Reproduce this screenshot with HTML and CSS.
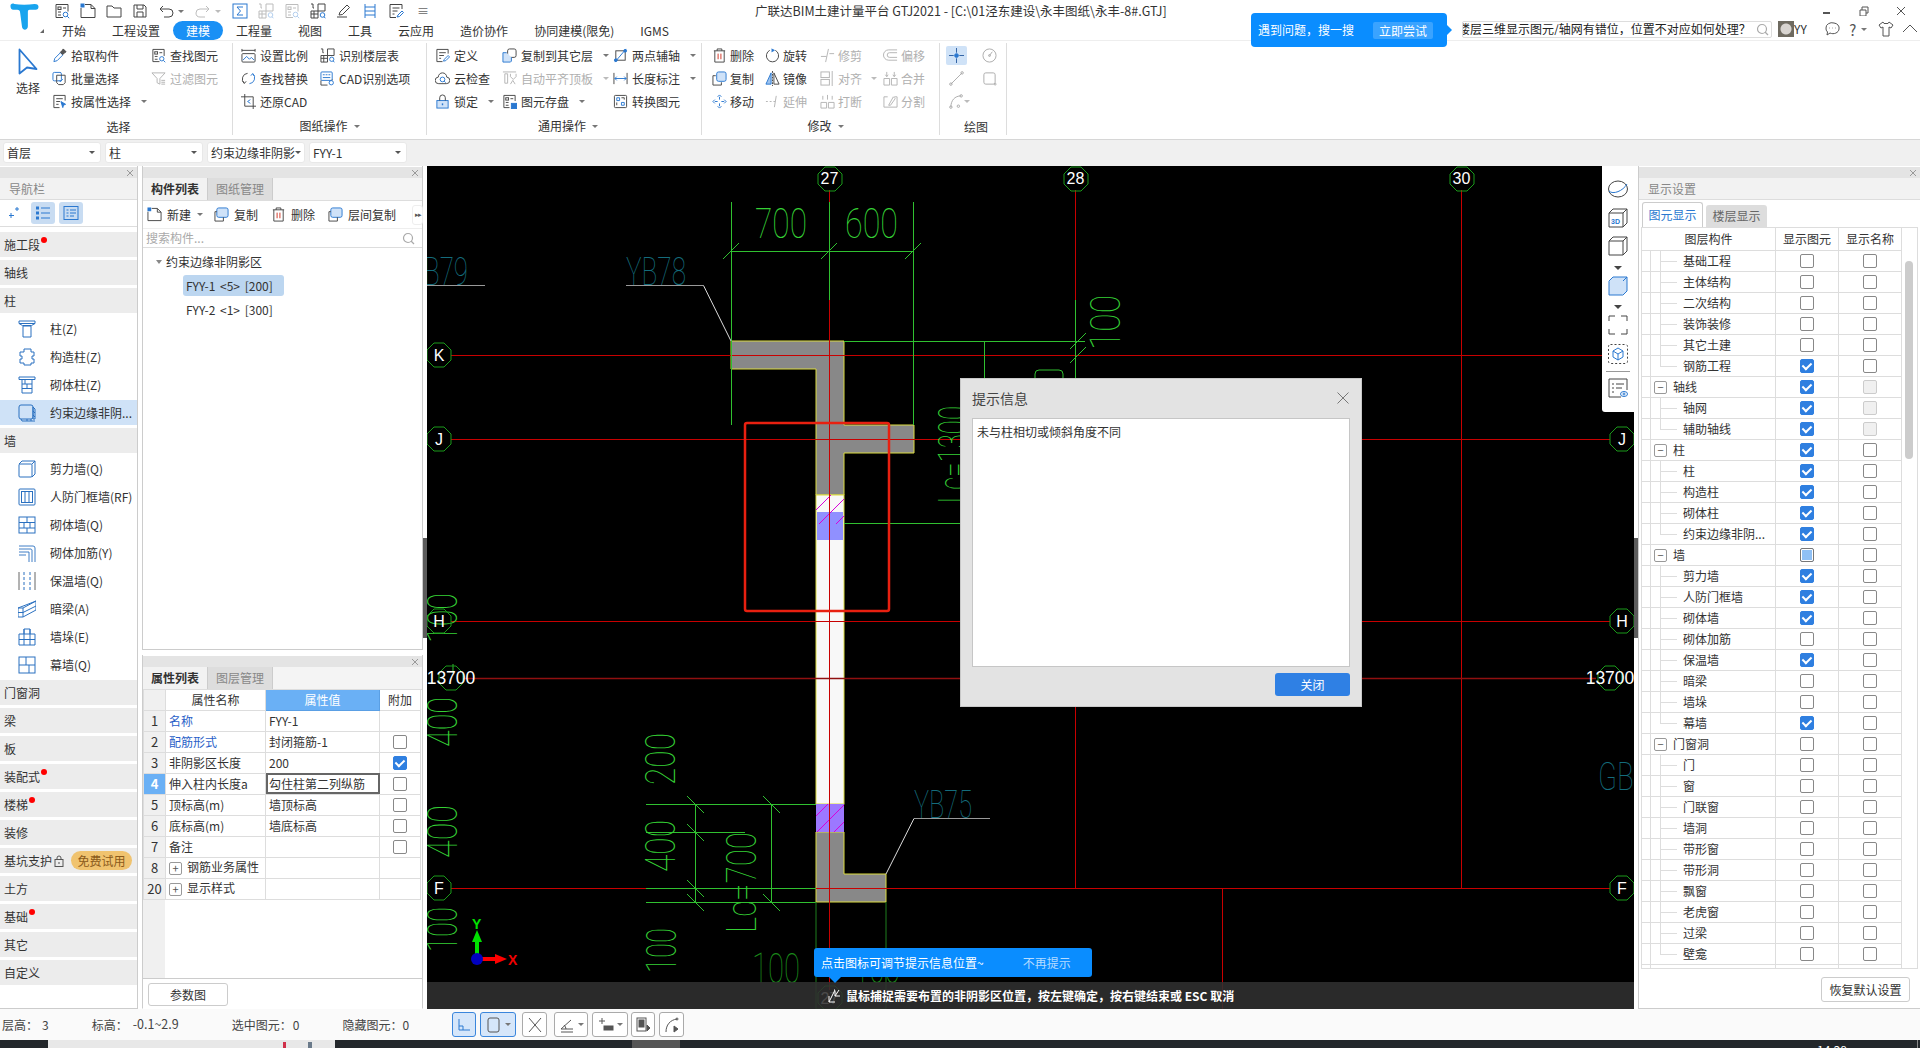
FILE: index.html
```html
<!DOCTYPE html>
<html lang="zh-CN">
<head>
<meta charset="utf-8">
<title>广联达BIM土建计量平台 GTJ2021</title>
<link rel="stylesheet" href="styles.css">
</head>
<body>
<svg class="defs" aria-hidden="true">
<defs>
<symbol id="pick" viewBox="0 0 16 16"><path d="M2 14.5l1-3.5 6-6 2.5 2.5-6 6z" stroke="#2a78d0"/><path d="M9 4.5l2-2 1-1.5 3 3-1.5 1-2 2z" fill="#555"/></symbol>
<symbol id="batch" viewBox="0 0 16 16"><rect x="1" y="1.5" width="9" height="9" rx="1.5" stroke="#2a78d0"/><path d="M5 4.5h9v8l-2 2H7l-2-2z"/><path d="M7.5 10l1.5 1.5 2.500-3" stroke="#2a78d0"/></symbol>
<symbol id="attr" viewBox="0 0 16 16"><path d="M14 7V1.500H2v13h6"/><path d="M4.500 5h7M4.500 8h4M4.500 11h2.500"/><path d="M9.500 8l5 3-2.200.8-.8 2.700z" fill="#2a78d0" stroke="#2a78d0"/></symbol>
<symbol id="find" viewBox="0 0 16 16"><path d="M9 14.500H2v-13h12v7"/><rect x="4" y="4" width="3" height="2.500"/><path d="M9 5h3M4 9h3M4 12h3"/><circle cx="11.500" cy="11.500" r="2.300" stroke="#2a78d0"/><path d="M13.200 13.200l2 2" stroke="#2a78d0"/></symbol>
<symbol id="filter" viewBox="0 0 16 16"><path d="M1 2h14l-5.500 6v6l-3-1.500V8z"/><path d="M11 10h4M11 12h4M11 14h4"/></symbol>
<symbol id="scale" viewBox="0 0 16 16"><path d="M1 1v3M15 1v3M1 2.500h14"/><rect x="1" y="6" width="14" height="9" rx="1"/><path d="M2 13l4-4 3 3 2-2 3 3" stroke="#2a78d0"/></symbol>
<symbol id="replace" viewBox="0 0 16 16"><path d="M7 2.500A6 6 0 0 0 3.500 13"/><path d="M1.500 10.500l2 2.800 2-2.300"/><path d="M9 13.500A6 6 0 0 0 12.500 3" stroke="#2a78d0"/><path d="M14.500 5.500l-2-2.800-2 2.300" stroke="#2a78d0"/></symbol>
<symbol id="restore" viewBox="0 0 16 16"><path d="M4 0v13h12M0 3h13v13"/><path d="M10 6L7 8l3 2" stroke="#2a78d0"/></symbol>
<symbol id="floor" viewBox="0 0 16 16"><path d="M1 1h2v4h1M1 8h7v7H1zM1 11h7M4 8v7M8 1h7v7H8z"/><circle cx="12.500" cy="12" r="2.300" stroke="#2a78d0"/><path d="M14 13.800l1.500 1.500" stroke="#2a78d0"/></symbol>
<symbol id="cad" viewBox="0 0 16 16"><rect x="1" y="1" width="12" height="9" rx="1" stroke="#2a78d0"/><path d="M3 4h2M6 4h2M9 4h2M3 7h8" stroke="#2a78d0"/><path d="M1 10v5h7M13 10v-1"/><circle cx="12" cy="12.500" r="2.300" stroke="#2a78d0"/></symbol>
<symbol id="define" viewBox="0 0 16 16"><path d="M14 6V1.500H2v13h6"/><path d="M4.500 5h7M4.500 8h5M4.500 11h2"/><path d="M9 14l1-2 4-4 1.500 1.500-4 4z" stroke="#2a78d0"/></symbol>
<symbol id="cloud" viewBox="0 0 16 16"><path d="M4 13.500a3.500 3.500 0 0 1-.5-7 4.500 4.500 0 0 1 9 0 3.500 3.500 0 0 1-.5 7z"/><circle cx="8" cy="9" r="2.500" stroke="#2a78d0"/><path d="M9.800 10.800l1.700 1.700" stroke="#2a78d0"/></symbol>
<symbol id="lock" viewBox="0 0 16 16"><rect x="2" y="7" width="12" height="8" fill="#cfe2f8" stroke="#2a78d0"/><path d="M5 7V4a3 3 0 0 1 6 0v3"/><path d="M8 10v2" stroke="#2a78d0" stroke-width="1.500"/></symbol>
<symbol id="copyto" viewBox="0 0 16 16"><rect x="6" y="1" width="9" height="9" rx="2"/><path d="M5 5H1v10h8l1-1v-4" fill="#cfe2f8" stroke="#2a78d0"/></symbol>
<symbol id="autoalign" viewBox="0 0 16 16"><path d="M1 1h14M3 3h3v10H3zM9 3v3l3 3 3-3V3"/><path d="M9 14l2.500-4 2.500 4"/></symbol>
<symbol id="store" viewBox="0 0 16 16"><path d="M8 14.500H2v-13h12v6"/><rect x="4" y="4" width="3" height="2.500"/><path d="M9 5h3M4 9h3M4 12h3"/><rect x="10" y="10" width="5.500" height="5.500" fill="#2a78d0" stroke="#2a78d0"/></symbol>
<symbol id="twopt" viewBox="0 0 16 16"><rect x="3" y="3" width="10" height="10"/><path d="M2 15L14 1" stroke="#2a78d0"/><circle cx="3" cy="13" r="1.500" fill="#2a78d0" stroke="#2a78d0"/><circle cx="13" cy="3" r="1.500" fill="#2a78d0" stroke="#2a78d0"/></symbol>
<symbol id="dimlen" viewBox="0 0 16 16"><path d="M1 2v12M15 2v12"/><path d="M2 8h12M4 6L2 8l2 2M12 6l2 2-2 2" stroke="#2a78d0"/></symbol>
<symbol id="convert" viewBox="0 0 16 16"><rect x="1.500" y="1.500" width="13" height="13" rx="1"/><path d="M4 4h3v3H4zM9 9h3v3H9z" stroke="#2a78d0"/><path d="M9 4h3v2M4 12V9"/></symbol>
<symbol id="del" viewBox="0 0 16 16"><path d="M2 3h12M5.500 3V1h5v2M3 3v12h10V3"/><path d="M6.500 6v6M9.500 6v6" stroke="#d03020"/></symbol>
<symbol id="rotate" viewBox="0 0 16 16"><path d="M5 2.500A6.500 6.500 0 1 0 11 2.500"/><path d="M7 1l3 1.500L7 4" stroke="#2a78d0" fill="#2a78d0"/></symbol>
<symbol id="trim" viewBox="0 0 16 16"><path d="M9 1L6 15M1 9h6M10 6h5"/></symbol>
<symbol id="offset" viewBox="0 0 16 16"><path d="M15 2H6a5.500 5.500 0 0 0 0 11h9M15 5H7a2.500 2.500 0 0 0 0 5h8"/></symbol>
<symbol id="copy" viewBox="0 0 16 16"><rect x="5" y="1" width="10" height="10" rx="2" fill="#cfe2f8" stroke="#2a78d0"/><path d="M4 5H1v10h9v-3"/></symbol>
<symbol id="mirror" viewBox="0 0 16 16"><path d="M1 14L6.500 2v12z" fill="#9ec3ee" stroke="#2a78d0"/><path d="M15 14L9.500 2v12z"/><path d="M8 0v16" stroke-dasharray="2 1"/></symbol>
<symbol id="align" viewBox="0 0 16 16"><rect x="1" y="1" width="9" height="6"/><rect x="1" y="9" width="9" height="6"/><path d="M13 0v16"/></symbol>
<symbol id="merge" viewBox="0 0 16 16"><path d="M1 8h6v7H1zM9 8h6v7H9z"/><path d="M4 1v5M2.500 4L4 6l1.500-2M12 1v5M10.500 4L12 6l1.500-2"/></symbol>
<symbol id="move" viewBox="0 0 16 16"><g stroke="#2a78d0"><path d="M8 3v3M8 10v3M3 8h3M10 8h3M6 3l2-2 2 2M6 13l2 2 2-2M3 6L1 8l2 2M13 6l2 2-2 2"/></g></symbol>
<symbol id="extend" viewBox="0 0 16 16"><path d="M1 8h2M5 8h2M9 8h2M12 2l-2 12"/></symbol>
<symbol id="brk" viewBox="0 0 16 16"><path d="M1 9h6v6H1zM9 9h6v6H9z"/><path d="M3 6V2M13 6V2M8 1v5"/></symbol>
<symbol id="split" viewBox="0 0 16 16"><path d="M5 3H1v11h14V3h-3"/><path d="M6 12l5-9 2 2-5 7z"/></symbol>
<symbol id="dpoint" viewBox="0 0 16 16"><path d="M8 0v5M8 11v5M0 8h5M11 8h5" stroke="#2a5ca0"/><circle cx="8" cy="8" r="2" fill="#2a78d0" stroke="#2a78d0"/></symbol>
<symbol id="dcircle" viewBox="0 0 16 16"><circle cx="8" cy="8" r="7"/><path d="M8 8l3-4"/><circle cx="8" cy="8" r="1"/></symbol>
<symbol id="dline" viewBox="0 0 16 16"><path d="M2 14L14 2"/><circle cx="2" cy="14" r="1.300"/><circle cx="14" cy="2" r="1.300"/></symbol>
<symbol id="drect" viewBox="0 0 16 16"><rect x="2" y="2" width="12" height="12" rx="2"/><circle cx="14" cy="14" r="1"/></symbol>
<symbol id="darc" viewBox="0 0 16 16"><path d="M2 14C2 7 6 2 13 2"/><circle cx="2" cy="14" r="1.300"/><circle cx="13" cy="2" r="1.300"/><circle cx="10" cy="13" r="1.300"/></symbol>
<symbol id="newdoc" viewBox="0 0 16 16"><path d="M5 1.500h6l4 4v9H1V5"/><path d="M11 1.500v4h4"/><rect x="0.500" y="0.500" width="4" height="4" fill="#2a78d0" stroke="none"/></symbol>
<symbol id="copy2" viewBox="0 0 16 16"><rect x="3" y="1" width="12" height="10" rx="2" fill="#cfe2f8" stroke="#2a78d0"/><path d="M3 5H1v10h9v-4"/></symbol>

<symbol id="n-col" viewBox="0 0 18 18"><path d="M1 1h16v2.500l-3.500 2H4.500L1 3.500zM5 6h8v11H5zM1 3.500h16"/></symbol>
<symbol id="n-gz" viewBox="0 0 18 18"><path d="M6 1h7v3h3v4h-2v3h2v4h-3v2H6v-2H2v-4h2V8H2V4h4z"/></symbol>
<symbol id="n-qt" viewBox="0 0 18 18"><path d="M1 1h16v2.500H1zM4 3.500h10V17H4zM4 8h10M4 12.500h10M9 8v4.500M7 3.500v4.500"/></symbol>
<symbol id="n-fyy" viewBox="0 0 18 18"><rect x="1" y="1" width="14" height="14" rx="2"/><path d="M15 3l2 2v10h-2zM3 15l1 2h13M9 15v2M13 15v2M15 7l2 2M15 11l2 2"/></symbol>
<symbol id="n-jlq" viewBox="0 0 18 18"><rect x="1" y="4" width="13" height="13" rx="1"/><path d="M1 4l3-3h13v13l-3 3M14 4l3-3"/></symbol>
<symbol id="n-rf" viewBox="0 0 18 18"><rect x="1" y="1" width="16" height="16" rx="1"/><rect x="3.500" y="3.500" width="11" height="11"/><path d="M7 3.500v11M11 3.500v11"/></symbol>
<symbol id="n-qtq" viewBox="0 0 18 18"><rect x="1" y="1" width="16" height="16"/><path d="M1 6.500h16M1 12h16M9 1v5.500M6 6.500V12M12 6.500V12M9 12v5"/></symbol>
<symbol id="n-jj" viewBox="0 0 18 18"><path d="M1 2h14a2 2 0 0 1 2 2v14M1 5h12a2 2 0 0 1 1 1v12M1 8h10v10M1 11h7" stroke-width=".9"/></symbol>
<symbol id="n-bw" viewBox="0 0 18 18"><path d="M1 0v18M17 0v18" stroke="#666"/><path d="M6 0v18M12 0v18" stroke-dasharray="3 2"/></symbol>
<symbol id="n-al" viewBox="0 0 18 18"><path d="M0 8l13-5 5-2v9L5 17H0zM0 8h5l13-7M5 8v9M0 12.500h5M5 12.500L18 6"/></symbol>
<symbol id="n-qd" viewBox="0 0 18 18"><path d="M1 6h5V1h6v5h5v11H1zM1 11.500h16M6 1v16M12 1v16M6 6h6"/></symbol>
<symbol id="n-mq" viewBox="0 0 18 18"><rect x="1" y="1" width="16" height="16"/><path d="M1 9h16M8 1v8M11 9v8"/></symbol>
<symbol id="oct" viewBox="0 0 26 26"><polygon points="8,1 18,1 25,8 25,18 18,25 8,25 1,18 1,8" fill="none" stroke="#1a9a1a"/></symbol>
</defs>
</svg>

<div class="app">
<header class="ribbon">
  <div class="top">
    <svg class="logo" viewBox="0 0 32 30"><path d="M2 3C2 1 4 0 6 1c6 1 14 1 21 0 3 0 4 1 4 3s-1 3-3 3h-6c-2 0-2 1-2 3v14c0 4-5 5-6 1L12 10c0-2-1-3-3-3H5C3 7 2 5 2 3z" fill="#18a4ee"/></svg>
    <span class="logo-tri"></span>
    <div class="top-main">
      <div class="qa">
        <svg class="qi"><use href="#find"/></svg>
        <svg class="qi"><use href="#newdoc"/></svg>
        <svg class="qi"><path d="M1 14V3h5l2 2h7v9z"/></svg>
        <svg class="qi"><path d="M2 2h10l2 2v10H2zM5 2v4h6V2M5 14V9h6v5"/></svg>
        <svg class="qi"><path d="M3 6h8a3.500 3.500 0 0 1 0 8H6M5 3L2 6l3 3"/></svg><i class="ar qa-dd"></i>
        <svg class="qi dis"><path d="M13 6H5a3.500 3.500 0 0 0 0 8h5M11 3l3 3-3 3"/></svg><i class="ar qa-dd dim"></i>
        <svg class="qi blue"><rect x="1" y="1" width="14" height="14"/><path d="M11 4H5l3.500 4L5 12h6"/></svg>
        <svg class="qi dis"><use href="#floor"/></svg>
        <svg class="qi dis"><use href="#find"/></svg>
        <svg class="qi"><use href="#floor"/></svg>
        <svg class="qi"><path d="M1 14h10M3 12l1-3 7-7 2.500 2.500-7 7z" /></svg>
        <svg class="qi blue"><path d="M3 1v14M13 1v14M3 4h10M3 8h10M3 12h10"/></svg>
        <svg class="qi"><use href="#define"/></svg>
        <span class="qa-more">≡</span>
        <span class="title">广联达BIM土建计量平台 GTJ2021 - [C:\01泾东建设\永丰图纸\永丰-8#.GTJ]</span>
        <div class="win">
          <svg class="wi"><path d="M1 7h7" stroke-width="2"/></svg>
          <svg class="wi"><path d="M1 4h6v6H1zM3 4V1h6v6H7"/></svg>
          <svg class="wi"><path d="M1 1l8 8M9 1l-8 8"/></svg>
        </div>
      </div>
      <div class="tabs">
        <span class="tab">开始</span><span class="tab">工程设置</span><span class="tab on">建模</span><span class="tab">工程量</span><span class="tab">视图</span><span class="tab">工具</span><span class="tab">云应用</span><span class="tab">造价协作</span><span class="tab">协同建模(限免)</span><span class="tab">IGMS</span>
        <div class="tools-r">
          <div class="search"><span class="search-t">楼层三维显示图元/轴网有错位，位置不对应如何处理？</span><svg class="s-ic"><circle cx="6" cy="6" r="4.500"/><path d="M9 9l3 3"/></svg></div>
          <span class="avatar"></span><span class="yy">YY</span>
          <svg class="ti chat"><path d="M2 7a6 5 0 0 1 8-5 6 5 0 0 1 5 6 6 5 0 0 1-9 4l-3 2 .5-3A6 5 0 0 1 2 7zM5 7h.5M8 7h.5M11 7h.5" stroke="#555"/></svg>
          <span class="help">?</span><i class="ar"></i>
          <svg class="ti shirt"><path d="M5 1L1 4l2 3 2-1v9h6V6l2 1 2-3-4-3-1 1.500H6z"/></svg>
          <svg class="ti up"><path d="M1 11l7-7 7 7"/></svg>
        </div>
      </div>
    </div>
    <div class="bubble">遇到问题，搜一搜<span class="try">立即尝试</span></div>
  </div>
  <div class="groups">
    <section class="grp g1">
      <div class="grid">
        <div class="big"><svg class="big-ic" viewBox="0 0 20 27"><path d="M1.500 1.500L18.500 21 9 19.500 1.500 25.500z" fill="#fff" stroke="#2a78d0" stroke-width="1.800" stroke-linejoin="round"/></svg><span>选择</span></div>
        <div class="ri"><svg class="ic"><use href="#pick"/></svg>拾取构件</div>
        <div class="ri"><svg class="ic"><use href="#find"/></svg>查找图元</div>
        <div class="ri"><svg class="ic"><use href="#batch"/></svg>批量选择</div>
        <div class="ri dis"><svg class="ic"><use href="#filter"/></svg>过滤图元</div>
        <div class="ri"><svg class="ic"><use href="#attr"/></svg>按属性选择<i class="ar"></i></div>
      </div>
      <div class="glabel lb">选择</div>
    </section>
    <section class="grp g2">
      <div class="grid">
        <div class="ri"><svg class="ic"><use href="#scale"/></svg>设置比例</div>
        <div class="ri"><svg class="ic"><use href="#floor"/></svg>识别楼层表</div>
        <div class="ri"><svg class="ic"><use href="#replace"/></svg>查找替换</div>
        <div class="ri"><svg class="ic"><use href="#cad"/></svg>CAD识别选项</div>
        <div class="ri"><svg class="ic"><use href="#restore"/></svg>还原CAD</div>
      </div>
      <div class="glabel">图纸操作<i class="ar"></i></div>
    </section>
    <section class="grp g3">
      <div class="grid">
        <div class="ri"><svg class="ic"><use href="#define"/></svg>定义</div>
        <div class="ri"><svg class="ic"><use href="#copyto"/></svg>复制到其它层<i class="ar"></i></div>
        <div class="ri"><svg class="ic"><use href="#twopt"/></svg>两点辅轴<i class="ar"></i></div>
        <div class="ri"><svg class="ic"><use href="#cloud"/></svg>云检查</div>
        <div class="ri dis"><svg class="ic"><use href="#autoalign"/></svg>自动平齐顶板<i class="ar"></i></div>
        <div class="ri"><svg class="ic"><use href="#dimlen"/></svg>长度标注<i class="ar"></i></div>
        <div class="ri"><svg class="ic"><use href="#lock"/></svg>锁定<i class="ar"></i></div>
        <div class="ri"><svg class="ic"><use href="#store"/></svg>图元存盘<i class="ar"></i></div>
        <div class="ri"><svg class="ic"><use href="#convert"/></svg>转换图元</div>
      </div>
      <div class="glabel">通用操作<i class="ar"></i></div>
    </section>
    <section class="grp g4">
      <div class="grid">
        <div class="ri tight"><svg class="ic"><use href="#del"/></svg>删除</div>
        <div class="ri tight"><svg class="ic"><use href="#rotate"/></svg>旋转</div>
        <div class="ri dis tight"><svg class="ic"><use href="#trim"/></svg>修剪</div>
        <div class="ri dis tight"><svg class="ic"><use href="#offset"/></svg>偏移</div>
        <div class="ri tight"><svg class="ic"><use href="#copy"/></svg>复制</div>
        <div class="ri tight"><svg class="ic"><use href="#mirror"/></svg>镜像</div>
        <div class="ri dis tight"><svg class="ic"><use href="#align"/></svg>对齐<i class="ar"></i></div>
        <div class="ri dis tight"><svg class="ic"><use href="#merge"/></svg>合并</div>
        <div class="ri tight"><svg class="ic"><use href="#move"/></svg>移动</div>
        <div class="ri dis tight"><svg class="ic"><use href="#extend"/></svg>延伸</div>
        <div class="ri dis tight"><svg class="ic"><use href="#brk"/></svg>打断</div>
        <div class="ri dis tight"><svg class="ic"><use href="#split"/></svg>分割</div>
      </div>
      <div class="glabel">修改<i class="ar"></i></div>
    </section>
    <section class="grp g5">
      <div class="grid">
        <div class="dbtn on"><svg class="ic"><use href="#dpoint"/></svg></div>
        <div class="dbtn dis"><svg class="ic"><use href="#dcircle"/></svg></div>
        <div class="dbtn dis"><svg class="ic"><use href="#dline"/></svg></div>
        <div class="dbtn dis"><svg class="ic"><use href="#drect"/></svg></div>
        <div class="dbtn dis"><svg class="ic"><use href="#darc"/></svg><i class="ar"></i></div>
      </div>
      <div class="glabel lb">绘图</div>
    </section>
  </div>
</header>

<div class="optbar">
  <div class="sel">首层<i class="ar"></i></div>
  <div class="sel">柱<i class="ar"></i></div>
  <div class="sel">约束边缘非阴影<i class="ar"></i></div>
  <div class="sel">FYY-1<i class="ar"></i></div>
</div>

<main class="main">
  <aside class="nav">
    <div class="pbar"><svg class="px"><path d="M1 1l6 6M7 1L1 7"/></svg></div>
    <div class="ptitle">导航栏</div>
    <div class="nav-tools">
      <svg class="nt wand"><path d="M3 13v-5M1 10.500h5M9 6V2M7 4h4" stroke="#2a78d0"/></svg>
      <span class="nt-btn"><svg class="nt"><path d="M6 3h9M6 8h9M6 13h9" stroke="#2a78d0"/><rect x="1.500" y="2" width="2" height="2" stroke="#2a78d0"/><rect x="1.500" y="7" width="2" height="2" stroke="#2a78d0"/><rect x="1.500" y="12" width="2" height="2" stroke="#2a78d0"/></svg></span>
      <span class="nt-btn"><svg class="nt"><rect x="1" y="1.500" width="14" height="13" stroke="#2a78d0"/><path d="M3.500 5h2M7 5h6M3.500 8h2M7 8h6M3.500 11h2M7 11h4" stroke="#2a78d0"/></svg></span>
    </div>
    <div class="nav-list">
      <div class="ng">施工段<b class="dot d3"></b></div>
      <div class="ng">轴线</div>
      <div class="ng">柱</div>
      <div class="ni"><svg class="ni-ic"><use href="#n-col"/></svg>柱(Z)</div>
      <div class="ni"><svg class="ni-ic"><use href="#n-gz"/></svg>构造柱(Z)</div>
      <div class="ni"><svg class="ni-ic"><use href="#n-qt"/></svg>砌体柱(Z)</div>
      <div class="ni on"><svg class="ni-ic"><use href="#n-fyy"/></svg>约束边缘非阴...</div>
      <div class="ng">墙</div>
      <div class="ni"><svg class="ni-ic"><use href="#n-jlq"/></svg>剪力墙(Q)</div>
      <div class="ni"><svg class="ni-ic"><use href="#n-rf"/></svg>人防门框墙(RF)</div>
      <div class="ni"><svg class="ni-ic"><use href="#n-qtq"/></svg>砌体墙(Q)</div>
      <div class="ni"><svg class="ni-ic"><use href="#n-jj"/></svg>砌体加筋(Y)</div>
      <div class="ni"><svg class="ni-ic"><use href="#n-bw"/></svg>保温墙(Q)</div>
      <div class="ni"><svg class="ni-ic"><use href="#n-al"/></svg>暗梁(A)</div>
      <div class="ni"><svg class="ni-ic"><use href="#n-qd"/></svg>墙垛(E)</div>
      <div class="ni"><svg class="ni-ic"><use href="#n-mq"/></svg>幕墙(Q)</div>
      <div class="ng">门窗洞</div>
      <div class="ng">梁</div>
      <div class="ng">板</div>
      <div class="ng">装配式<b class="dot d3"></b></div>
      <div class="ng">楼梯<b class="dot d2"></b></div>
      <div class="ng">装修</div>
      <div class="ng">基坑支护<svg class="lk"><rect x="1" y="4.500" width="8" height="7"/><path d="M3 4.500V3a2 2 0 0 1 4 0v1.500M5 7v2"/></svg><span class="free">免费试用</span></div>
      <div class="ng">土方</div>
      <div class="ng">基础<b class="dot d2"></b></div>
      <div class="ng">其它</div>
      <div class="ng">自定义</div>
    </div>
  </aside>

  <div class="mid">
    <section class="panel comp">
      <div class="pbar"><svg class="px"><path d="M1 1l6 6M7 1L1 7"/></svg></div>
      <div class="ptabs"><span class="ptab on">构件列表</span><span class="ptab">图纸管理</span></div>
      <div class="ctools">
        <span class="ct"><svg class="ct-ic"><use href="#newdoc"/></svg>新建</span><i class="ar ct-ar"></i>
        <span class="ct"><svg class="ct-ic"><use href="#copy2"/></svg>复制</span>
        <span class="ct"><svg class="ct-ic"><use href="#del"/></svg>删除</span>
        <span class="ct"><svg class="ct-ic"><use href="#copy2"/></svg>层间复制</span>
        <span class="ct-more">▸▸</span>
      </div>
      <div class="csearch"><span>搜索构件...</span><svg class="s-ic"><circle cx="6" cy="6" r="4.500"/><path d="M9 9l3 3"/></svg></div>
      <div class="tree">
        <div class="tree-root"><i class="tri"></i>约束边缘非阴影区</div>
        <div class="tree-node on">FYY-1 &lt;5&gt; [200]</div>
        <div class="tree-node">FYY-2 &lt;1&gt; [300]</div>
      </div>
    </section>
    <section class="panel prop">
      <div class="pbar"><svg class="px"><path d="M1 1l6 6M7 1L1 7"/></svg></div>
      <div class="ptabs"><span class="ptab on">属性列表</span><span class="ptab">图层管理</span></div>
      <div class="pt-wrap">
        <table class="pt">
          <colgroup><col class="c1"><col class="c2"><col class="c3"><col class="c4"></colgroup>
          <thead><tr><th></th><th class="ctr">属性名称</th><th class="ctr hv">属性值</th><th class="ctr">附加</th></tr></thead>
          <tbody>
            <tr><td class="n">1</td><td class="lnk">名称</td><td>FYY-1</td><td></td></tr>
            <tr><td class="n">2</td><td class="lnk">配筋形式</td><td>封闭箍筋-1</td><td class="ctr"><i class="cb"></i></td></tr>
            <tr><td class="n">3</td><td>非阴影区长度</td><td>200</td><td class="ctr"><i class="cb on"></i></td></tr>
            <tr><td class="n cur">4</td><td>伸入柱内长度a</td><td class="edit">勾住柱第二列纵筋</td><td class="ctr"><i class="cb"></i></td></tr>
            <tr><td class="n">5</td><td>顶标高(m)</td><td>墙顶标高</td><td class="ctr"><i class="cb"></i></td></tr>
            <tr><td class="n">6</td><td>底标高(m)</td><td>墙底标高</td><td class="ctr"><i class="cb"></i></td></tr>
            <tr><td class="n">7</td><td>备注</td><td></td><td class="ctr"><i class="cb"></i></td></tr>
            <tr><td class="n">8</td><td><i class="pm">+</i>钢筋业务属性</td><td></td><td></td></tr>
            <tr><td class="n">20</td><td><i class="pm">+</i>显示样式</td><td></td><td></td></tr>
          </tbody>
        </table>
      </div>
      <div class="pfoot"><span class="btn param">参数图</span></div>
    </section>
  </div>

  <div class="split"><span class="handle"></span></div>

  <div class="canvas">
    <svg class="cad-svg" viewBox="427 166 1207 843" width="1207" height="843">
      <defs>
        <pattern id="hatch" width="17" height="17" patternUnits="userSpaceOnUse"><path d="M0 17L17 0" stroke="#d800d8" stroke-width="1"/></pattern>
      </defs>
      <g stroke="#dcdc40" stroke-width="1">
        <polygon fill="#888" points="731,341 844,341 844,425 914,425 914,453 844,453 844,495 816,495 816,369 731,369"/>
        <rect fill="#f8f8f8" x="816" y="495" width="28" height="309"/>
        <polygon fill="#888" points="816,832 844,832 844,874 886,874 886,902 816,902"/>
      </g>
      <rect x="817" y="512" width="26" height="28" fill="#9090ff"/>
      <rect x="816" y="495" width="28" height="29" fill="url(#hatch)"/>
      <rect x="816" y="804" width="28" height="28" fill="#9c78ff"/>
      <rect x="816" y="804" width="28" height="28" fill="url(#hatch)"/>
      <g stroke="#c80000" stroke-width="1" fill="none">
        <path d="M829.500 190V990"/>
        <path d="M1075.500 190V888M1461.500 190V888M1222.500 888V1009"/>
        <path d="M451 355.500H1602M451 439.500H1610M451 621.500H1610M451 888.500H1610"/>
        <path d="M463 678.500H1596" stroke="#901010" stroke-width="1.500"/>
      </g>
      <g stroke="#30c030" stroke-width="1" fill="none">
        <path d="M731.500 202V425M829.500 202V300M913.500 202V425" />
        <path d="M731 251.500H914M723 259l16-16M821 259l16-16M905 259l16-16"/>
        <path d="M844 341.500H1085M844 523.500H960M1075.500 300V378M984.500 341V378M1070 349l16-16M1070 363l16-16M1035 378v-4q0-4 4-4h20q4 0 4 4v4"/>
        <path d="M646 804.500H816M646 832.500H745M646 888.500H816M646 902.500H816"/>
        <path d="M695.500 804V902M771.500 804V902"/>
        <path d="M687 796l17 17M687 824l17 17M687 880l17 17M687 894l17 17M763 796l17 17M763 894l17 17"/>
        <path d="M453 664v9" />
      </g>
      <path d="M816 902V1009H886V902" fill="none" stroke="#1f7f1f"/>
      <g class="dim">
        <text x="755" y="238" textLength="52" lengthAdjust="spacingAndGlyphs">700</text>
        <text x="845" y="238" textLength="53" lengthAdjust="spacingAndGlyphs">600</text>
        <text transform="translate(1120 350) rotate(-90)" textLength="55" lengthAdjust="spacingAndGlyphs">100</text>
        <text transform="translate(968 503) rotate(-90)" textLength="97" lengthAdjust="spacingAndGlyphs">Lc=1300</text>
        <text transform="translate(457 643) rotate(-90)" textLength="50" lengthAdjust="spacingAndGlyphs">100</text>
        <text transform="translate(457 747) rotate(-90)" textLength="50" lengthAdjust="spacingAndGlyphs">400</text>
        <text transform="translate(457 858) rotate(-90)" textLength="53" lengthAdjust="spacingAndGlyphs">400</text>
        <text transform="translate(457 952) rotate(-90)" textLength="45" lengthAdjust="spacingAndGlyphs">100</text>
        <text transform="translate(675 785) rotate(-90)" textLength="52" lengthAdjust="spacingAndGlyphs">200</text>
        <text transform="translate(675 872) rotate(-90)" textLength="52" lengthAdjust="spacingAndGlyphs">400</text>
        <text transform="translate(676 973) rotate(-90)" textLength="45" lengthAdjust="spacingAndGlyphs">100</text>
        <text transform="translate(756 933) rotate(-90)" textLength="101" lengthAdjust="spacingAndGlyphs">Lc=700</text>
        <text class="dark" x="752" y="983" textLength="48" lengthAdjust="spacingAndGlyphs">100</text>
        <text class="dark" x="854" y="983" textLength="46" lengthAdjust="spacingAndGlyphs">100</text>
      </g>
      <g class="teal">
        <text x="626" y="285" textLength="60" lengthAdjust="spacingAndGlyphs">YB78</text>
        <text x="424" y="285" textLength="44" lengthAdjust="spacingAndGlyphs">B79</text>
        <text x="914" y="818" textLength="58" lengthAdjust="spacingAndGlyphs">YB75</text>
        <text x="1598" y="790" textLength="52" lengthAdjust="spacingAndGlyphs">GBZ</text>
      </g>
      <path d="M427 285.500H485M626 285.500H703.500M914 818.500H990" stroke="#999" fill="none"/>
      <path d="M703.500 285.500L731 341M914 818.500L886 874" stroke="#ddd" fill="none"/>
      <rect x="745" y="423" width="144" height="188" rx="2" fill="none" stroke="#e82010" stroke-width="2.500"/>
      <use href="#oct" x="817" y="166" width="26" height="26"/>
      <use href="#oct" x="1063" y="166" width="26" height="26"/>
      <use href="#oct" x="1449" y="166" width="26" height="26"/>
      <use href="#oct" x="426" y="342" width="26" height="26"/>
      <use href="#oct" x="426" y="426" width="26" height="26"/>
      <use href="#oct" x="426" y="608" width="26" height="26"/>
      <use href="#oct" x="426" y="875" width="26" height="26"/>
      <use href="#oct" x="438" y="665" width="26" height="26"/>
      <use href="#oct" x="1597" y="665" width="26" height="26"/>
      <use href="#oct" x="1609" y="426" width="26" height="26"/>
      <use href="#oct" x="1609" y="608" width="26" height="26"/>
      <use href="#oct" x="1609" y="875" width="26" height="26"/>
      <use href="#oct" x="817" y="985" width="26" height="26"/>
      <g class="axl">
        <text x="829.500" y="184">27</text><text x="1075.500" y="184">28</text><text x="1461.500" y="184">30</text>
        <text x="439" y="361">K</text><text x="439" y="445">J</text><text x="439" y="627">H</text><text x="439" y="894">F</text>
        <text x="1622" y="445">J</text><text x="1622" y="627">H</text><text x="1622" y="894">F</text>
        <text class="wide" x="451" y="684">13700</text><text class="wide" x="1610" y="684">13700</text>
        <text x="829.500" y="1004">27</text>
      </g>
      <path d="M477 958V938" stroke="#00e000" stroke-width="4"/>
      <polygon points="477,930 472,942 482,942" fill="#00e000"/>
      <path d="M480 959H496" stroke="#ff0000" stroke-width="4"/>
      <polygon points="507,959 495,954 495,964" fill="#ff0000"/>
      <circle cx="477" cy="959" r="6" fill="#0000c0"/>
      <text class="ucs-y" x="472" y="929">Y</text>
      <text class="ucs-x" x="508" y="965">X</text>
    </svg>
    <div class="hint"><svg class="hint-ic"><path d="M9 1L3 13M3 13V7M3 13h6M9 1h-1M13 1L9 7M9 7h5M9 7V2" /></svg>鼠标捕捉需要布置的非阴影区位置，按左键确定，按右键结束或 ESC 取消</div>
    <div class="tip"><span>点击图标可调节提示信息位置~</span><span class="tip-no">不再提示</span></div>
    <div class="vbar">
      <svg class="vi"><ellipse cx="10" cy="10" rx="9.500" ry="8" stroke="#444"/><path d="M1 12c4 4 14 0 18-7" stroke="#2a78d0"/></svg>
      <svg class="vi"><path d="M1 5h14v14H1zM1 5l4-4h14v14l-4 4M15 5l4-4"/><text class="vi-t" x="3" y="16">3D</text></svg>
      <svg class="vi"><path d="M1 5h14v14H1zM1 5l4-4h14v14l-4 4M15 5l4-4"/></svg>
      <i class="vdd"></i>
      <svg class="vi"><path d="M1 5h14v14H1z" fill="#cfe2f8" stroke="#2a78d0"/><path d="M1 5l4-4h14v14l-4 4M15 5l4-4" fill="#cfe2f8" stroke="#2a78d0"/></svg>
      <i class="vdd"></i>
      <svg class="vi"><path d="M1 6V1h6M13 1h6v5M19 14v5h-6M7 19H1v-5"/></svg>
      <svg class="vi"><rect x=".5" y=".5" width="19" height="19" rx="2" stroke-dasharray="2 2"/><path d="M10 4l5 3v6l-5 3-5-3V7zM5 7l5 3 5-3M10 10v6" stroke="#2a78d0"/></svg>
      <span class="vsep"></span>
      <svg class="vi"><path d="M19 12V1H1v18h12M4 6h2M8 6h8M4 10h2M8 10h6M4 14h2"/><ellipse cx="16" cy="16" rx="3.500" ry="2.500" stroke="#2a78d0"/><circle cx="16" cy="16" r="1" stroke="#2a78d0"/></svg>
    </div>
    <div class="dlg">
      <div class="dlg-head"><span>提示信息</span><svg class="dlg-x"><path d="M.5.500l11 11M11.500.500l-11 11"/></svg></div>
      <div class="dlg-body">未与柱相切或倾斜角度不同</div>
      <div class="dlg-foot"><span class="dlg-btn">关闭</span></div>
    </div>
  </div>

  <div class="split"><span class="handle"></span></div>

  <aside class="disp">
    <div class="pbar"><svg class="px"><path d="M1 1l6 6M7 1L1 7"/></svg></div>
    <div class="ptitle">显示设置</div>
    <div class="dtabs"><span class="dtab on">图元显示</span><span class="dtab">楼层显示</span></div>
    <div class="dtable">
      <div class="dhead"><span class="dh1">图层构件</span><span class="dc">显示图元</span><span class="dc">显示名称</span></div>
      <div class="drows">
        <div class="dr"><span class="dt sub">基础工程</span><span class="dc"><i class="cb"></i></span><span class="dc"><i class="cb"></i></span></div>
        <div class="dr"><span class="dt sub">主体结构</span><span class="dc"><i class="cb"></i></span><span class="dc"><i class="cb"></i></span></div>
        <div class="dr"><span class="dt sub">二次结构</span><span class="dc"><i class="cb"></i></span><span class="dc"><i class="cb"></i></span></div>
        <div class="dr"><span class="dt sub">装饰装修</span><span class="dc"><i class="cb"></i></span><span class="dc"><i class="cb"></i></span></div>
        <div class="dr"><span class="dt sub">其它土建</span><span class="dc"><i class="cb"></i></span><span class="dc"><i class="cb"></i></span></div>
        <div class="dr"><span class="dt sub last">钢筋工程</span><span class="dc"><i class="cb on"></i></span><span class="dc"><i class="cb"></i></span></div>
        <div class="dr"><span class="dt gp"><i class="pm">−</i>轴线</span><span class="dc"><i class="cb on"></i></span><span class="dc"><i class="cb off"></i></span></div>
        <div class="dr"><span class="dt sub">轴网</span><span class="dc"><i class="cb on"></i></span><span class="dc"><i class="cb off"></i></span></div>
        <div class="dr"><span class="dt sub last">辅助轴线</span><span class="dc"><i class="cb on"></i></span><span class="dc"><i class="cb off"></i></span></div>
        <div class="dr"><span class="dt gp"><i class="pm">−</i>柱</span><span class="dc"><i class="cb on"></i></span><span class="dc"><i class="cb"></i></span></div>
        <div class="dr"><span class="dt sub">柱</span><span class="dc"><i class="cb on"></i></span><span class="dc"><i class="cb"></i></span></div>
        <div class="dr"><span class="dt sub">构造柱</span><span class="dc"><i class="cb on"></i></span><span class="dc"><i class="cb"></i></span></div>
        <div class="dr"><span class="dt sub">砌体柱</span><span class="dc"><i class="cb on"></i></span><span class="dc"><i class="cb"></i></span></div>
        <div class="dr"><span class="dt sub last">约束边缘非阴...</span><span class="dc"><i class="cb on"></i></span><span class="dc"><i class="cb"></i></span></div>
        <div class="dr"><span class="dt gp"><i class="pm">−</i>墙</span><span class="dc"><i class="cb part"></i></span><span class="dc"><i class="cb"></i></span></div>
        <div class="dr"><span class="dt sub">剪力墙</span><span class="dc"><i class="cb on"></i></span><span class="dc"><i class="cb"></i></span></div>
        <div class="dr"><span class="dt sub">人防门框墙</span><span class="dc"><i class="cb on"></i></span><span class="dc"><i class="cb"></i></span></div>
        <div class="dr"><span class="dt sub">砌体墙</span><span class="dc"><i class="cb on"></i></span><span class="dc"><i class="cb"></i></span></div>
        <div class="dr"><span class="dt sub">砌体加筋</span><span class="dc"><i class="cb"></i></span><span class="dc"><i class="cb"></i></span></div>
        <div class="dr"><span class="dt sub">保温墙</span><span class="dc"><i class="cb on"></i></span><span class="dc"><i class="cb"></i></span></div>
        <div class="dr"><span class="dt sub">暗梁</span><span class="dc"><i class="cb"></i></span><span class="dc"><i class="cb"></i></span></div>
        <div class="dr"><span class="dt sub">墙垛</span><span class="dc"><i class="cb"></i></span><span class="dc"><i class="cb"></i></span></div>
        <div class="dr"><span class="dt sub last">幕墙</span><span class="dc"><i class="cb on"></i></span><span class="dc"><i class="cb"></i></span></div>
        <div class="dr"><span class="dt gp"><i class="pm">−</i>门窗洞</span><span class="dc"><i class="cb"></i></span><span class="dc"><i class="cb"></i></span></div>
        <div class="dr"><span class="dt sub">门</span><span class="dc"><i class="cb"></i></span><span class="dc"><i class="cb"></i></span></div>
        <div class="dr"><span class="dt sub">窗</span><span class="dc"><i class="cb"></i></span><span class="dc"><i class="cb"></i></span></div>
        <div class="dr"><span class="dt sub">门联窗</span><span class="dc"><i class="cb"></i></span><span class="dc"><i class="cb"></i></span></div>
        <div class="dr"><span class="dt sub">墙洞</span><span class="dc"><i class="cb"></i></span><span class="dc"><i class="cb"></i></span></div>
        <div class="dr"><span class="dt sub">带形窗</span><span class="dc"><i class="cb"></i></span><span class="dc"><i class="cb"></i></span></div>
        <div class="dr"><span class="dt sub">带形洞</span><span class="dc"><i class="cb"></i></span><span class="dc"><i class="cb"></i></span></div>
        <div class="dr"><span class="dt sub">飘窗</span><span class="dc"><i class="cb"></i></span><span class="dc"><i class="cb"></i></span></div>
        <div class="dr"><span class="dt sub">老虎窗</span><span class="dc"><i class="cb"></i></span><span class="dc"><i class="cb"></i></span></div>
        <div class="dr"><span class="dt sub">过梁</span><span class="dc"><i class="cb"></i></span><span class="dc"><i class="cb"></i></span></div>
        <div class="dr"><span class="dt sub last">壁龛</span><span class="dc"><i class="cb"></i></span><span class="dc"><i class="cb"></i></span></div>
        <div class="dr"><span class="dt gp"><i class="pm">−</i></span><span class="dc"><i class="cb on"></i></span><span class="dc"><i class="cb"></i></span></div>
      </div>
      <span class="scroll"></span>
    </div>
    <div class="dfoot"><span class="btn reset">恢复默认设置</span></div>
  </aside>
</main>

<footer class="status">
  <span class="st s1">层高：</span><span class="st s2">3</span>
  <span class="st s3">标高：</span><span class="st s4">-0.1~2.9</span>
  <span class="st s5">选中图元：</span><span class="st s6">0</span>
  <span class="st s7">隐藏图元：</span><span class="st s8">0</span>
  <div class="sbtns">
    <span class="sb on w24"><svg class="sb-ic"><path d="M3 2v11h11M3 9h4v4" stroke="#2a78d0"/></svg></span>
    <span class="sb on w36 m4"><svg class="sb-ic"><rect x="2" y="1" width="11" height="14" rx="2"/></svg><i class="ar"></i></span>
    <span class="sb w25 m6"><svg class="sb-ic"><path d="M2 1l12 14M14 1L2 15"/></svg></span>
    <span class="sb w34 m7"><svg class="sb-ic"><path d="M2 12L12 3M2 12h12M7 12a6 6 0 0 0-2-4M2 15h12" /></svg><i class="ar"></i></span>
    <span class="sb w36 m4"><svg class="sb-ic"><path d="M1 4h6M4 1v6" /><rect x="6" y="9" width="9" height="4" fill="#555"/></svg><i class="ar"></i></span>
    <span class="sb w24 m3"><svg class="sb-ic"><rect x="2" y="1" width="9" height="13"/><rect x="4" y="3" width="5" height="7" fill="#555"/><path d="M12 8l3 3-3 3z" fill="#555"/></svg></span>
    <span class="sb w25 m4"><svg class="sb-ic"><path d="M2 15C2 8 6 3 13 2"/><circle cx="13" cy="2" r="1"/><path d="M10 9l4 3-4 3z" fill="#555"/></svg></span>
  </div>
</footer>
<div class="taskbar">
  <span class="tk-light"><b class="tk-a"></b><b class="tk-b"></b></span>
  <span class="tk-gray"></span>
  <span class="tk-time">14:28</span>
  <span class="tk-line"></span>
</div>
</div>
</body>
</html>
```
FILE: styles.css
```css
*{box-sizing:border-box}
html,body{margin:0;padding:0;width:1920px;height:1048px;overflow:hidden;background:#fff}
body{font-family:"Noto Sans CJK SC","Noto Sans",sans-serif;font-size:12px;color:#333;line-height:1}
i{font-style:normal}
b{font-weight:400}
svg{display:block;flex:none}
.defs{position:absolute;width:0;height:0}
.app{display:flex;flex-direction:column;width:1920px;height:1048px}

/* ribbon */
.ribbon{height:140px;flex:none;background:#fff;border-bottom:1px solid #d6d6d6;display:flex;flex-direction:column}
.top{height:41px;flex:none;display:flex;border-bottom:1px solid #eee;position:relative}
.logo{width:32px;height:29px;margin:3px 0 0 8px}
.logo-tri{width:0;height:0;margin:29px 0 0 0;border-left:4px solid transparent;border-bottom:4px solid #666}
.top-main{flex:1;display:flex;flex-direction:column;margin-left:5px}
.qa{height:21px;display:flex;align-items:center;padding-left:5px;margin-top:1px}
.qi{width:16px;height:16px;margin-right:10px;fill:none;stroke:#444;stroke-width:1}
.qi.blue{stroke:#2a78d0}
.qi.dis{opacity:.35}
.qa .qa-dd{margin:0 11px 0 -6px}
.qa-more{font-size:12px;color:#666;margin-left:3px;width:12px}
.title{margin-left:326px;white-space:nowrap;font-size:12.500px;color:#333}
.win{margin-left:auto;display:flex;align-items:center;padding-right:14px;gap:27px}
.wi{width:10px;height:10px;fill:none;stroke:#555;stroke-width:1}
.tabs{height:19px;display:flex;align-items:center;position:relative}
.tab{padding:0 13px;height:19px;line-height:19px;white-space:nowrap;font-size:12px}
.tab.on{background:#1990f5;color:#fff;border-radius:10px}
.tools-r{position:absolute;left:1413px;top:-1px;width:456px;height:18px;display:flex;align-items:center}
.search{width:318px;height:17px;border:1px solid #ddd;border-radius:2px;display:flex;align-items:center;overflow:hidden;position:relative}
.search-t{margin-left:-5px;flex:none;color:#222;white-space:nowrap;width:296px;overflow:hidden}
.s-ic{width:13px;height:13px;fill:none;stroke:#aaa;stroke-width:1.200}
.search .s-ic{margin-left:2px}
.avatar{width:16px;height:16px;margin-left:6px;background:radial-gradient(circle at 50% 50%,#d8d4d0 0 5px,#6e6a60 6px);flex:none}
.yy{margin-left:0;width:31px;color:#333}
.ti{width:16px;height:16px;fill:none;stroke:#555;stroke-width:1}
.help{font-size:15px;margin-left:9px;color:#555;width:9px}
.tools-r .ar{margin:0 11px 0 3px}
.shirt{margin-right:8px}
.bubble{position:absolute;left:1251px;top:13px;width:196px;height:34px;background:#0a8dff;border-radius:4px;color:#fff;display:flex;align-items:center;padding-left:7px;gap:19px;z-index:3}
.bubble::after{content:"";position:absolute;right:-5px;top:12px;border-left:5px solid #0a8dff;border-top:5px solid transparent;border-bottom:5px solid transparent}
.try{width:60px;height:17px;line-height:17px;text-align:center;background:#3aa3ff;border-radius:2px}

.groups{flex:1;display:flex}
.grp{display:flex;flex-direction:column;border-right:1px solid #ddd;margin:2px 0 4px;position:relative}
.grid{display:grid;grid-auto-rows:23px;height:74px;padding-top:1px;align-items:center;align-content:start}
.ri{display:flex;align-items:center;gap:4px;white-space:nowrap;height:23px}
.ri.tight{gap:3px}
.ri.dis{color:#b0b0b0}
.ic{width:15px;height:15px;fill:none;stroke:#444;stroke-width:1}
.dis .ic{opacity:.4}
.ar{display:inline-block;width:0;height:0;border-top:3px solid #777;border-left:3px solid transparent;border-right:3px solid transparent;margin-left:6px;flex:none}
.ar.dim,.dis .ar{border-top-color:#bbb}
.glabel{flex:1;display:flex;align-items:center;justify-content:center;font-size:12px}
.glabel.lb{padding-top:2px}
.g1{width:233px;padding-left:16px}
.g1 .grid{grid-template-columns:36px 99px 80px}
.g1 .glabel{padding-right:11px}
.g2 .glabel{padding-right:8px}
.big{grid-row:1/4;display:flex;flex-direction:column;align-items:flex-start;height:69px;padding:4px 0 0 2px;gap:7px}
.big span{margin-left:-2px}
.big-ic{width:20px;height:27px}
.g1 .big+.ri{grid-column:2}
.g1 .grid .ri:nth-child(6){grid-column:2}
.g2{width:194px;padding-left:8px}
.g2 .grid{grid-template-columns:79px 100px}
.g3{width:275px;padding-left:8px}
.g3 .grid{grid-template-columns:67px 111px 85px}
.g4{width:238px;padding-left:10px}
.g4 .grid{grid-template-columns:53px 55px 63px 55px}
.g5{width:67px;padding-left:6px}
.g5 .grid{grid-template-columns:33px 26px}
.dbtn{width:21px;height:19px;display:flex;align-items:center;justify-content:center;border-radius:2px;position:relative}
.dbtn.on{background:#cfe2f7}
.dbtn .ar{position:absolute;left:18px;top:8px;margin:0}
.dbtn.dis .ic{opacity:.45}

.optbar{height:26px;flex:none;background:#f0f0f0;display:flex;padding:2px 0 0 3px;gap:4px}
.sel{width:98px;height:21px;background:#fff;border-radius:3px;display:flex;align-items:center;justify-content:space-between;padding:0 3px;white-space:nowrap;border:1px solid #e8e8e8}
.sel .ar{border-top-color:#555;margin:0 2px 0 0}

/* main */
.main{flex:1;display:flex;min-height:0;background:#fff}
.nav{width:138px;flex:none;border-right:1px solid #ccc;border-bottom:1px solid #ccc;background:#fff}
.pbar{height:11px;margin-top:1px;background:#e4e4e4;display:flex;justify-content:flex-end;align-items:center;padding-right:3px}
.px{width:8px;height:8px;fill:none;stroke:#999;stroke-width:1}
.ptitle{height:22px;background:#f2f2f2;border-bottom:1px solid #ddd;display:flex;align-items:center;padding-left:9px;color:#888}
.nav-tools{height:27px;display:flex;align-items:center;border-bottom:1px solid #ddd;padding-left:8px}
.nt{width:16px;height:16px;fill:none;stroke-width:1}
.wand{margin-right:7px}
.nt-btn{width:24px;height:22px;background:#c8dcf2;border-radius:3px;display:flex;align-items:center;justify-content:center;margin-right:4px}
.nav-list{padding-top:2px}
.ng,.ni{height:25px;margin-top:3px;display:flex;align-items:center;position:relative;white-space:nowrap;font-size:12px}
.ng{background:#ececec;padding-left:4px}
.ni{padding-left:18px}
.ni.on{background:#cfe2f7}
.ni-ic{width:18px;height:18px;margin-right:14px;fill:none;stroke:#2a70c0;stroke-width:1}
.dot{width:6px;height:6px;border-radius:50%;background:#f00;margin:-10px 0 0 1px;flex:none}
.lk{width:10px;height:12px;margin-left:2px;fill:none;stroke:#555;stroke-width:1}
.free{margin-left:7px;width:61px;height:19px;line-height:19px;border-radius:10px;background:#f0c36f;color:#8a5a1a;text-align:center}

.mid{width:281px;flex:none;margin-left:4px;display:flex;flex-direction:column;gap:5px}
.panel{border:1px solid #ccc;border-top:0;display:flex;flex-direction:column;background:#fff}
.comp{height:484px}
.prop{flex:1;border-bottom:1px solid #fff;border-left-color:#ccc;border-right-color:#ccc}
.ptabs{height:23px;display:flex;background:#f4f4f4;border-bottom:1px solid #ddd;flex:none}
.ptab{width:65px;height:22px;display:flex;align-items:center;justify-content:center;background:#ddd;color:#888;font-size:12px;border-right:1px solid #ccc}
.ptab.on{background:#f2f2f2;color:#333;font-weight:700}
.ctools{height:28px;flex:none;display:flex;align-items:center;padding-left:4px;border-bottom:1px solid #eee;position:relative}
.ct{display:flex;align-items:center;gap:5px;margin-right:13px;white-space:nowrap;flex:none}
.ct-ic{width:15px;height:15px;fill:none;stroke:#444;stroke-width:1}
.ctools .ct-ar{margin:0 11px 0 -7px}
.ct-more{margin-left:3px;width:11px;height:20px;display:flex;align-items:center;justify-content:center;border:1px solid #eee;font-size:7px;color:#555;border-radius:3px;letter-spacing:-1px;flex:none}
.csearch{height:19px;flex:none;display:flex;align-items:center;justify-content:space-between;padding:0 7px 0 3px;border-bottom:1px solid #ddd;color:#aaa}
.tree{flex:1}
.tree-root{height:14px;margin-top:7px;padding-left:13px;display:flex;align-items:center}
.tri{width:0;height:0;border-top:4px solid #888;border-left:3px solid transparent;border-right:3px solid transparent;margin-right:4px}
.tree-node{width:101px;height:21px;margin:6px 0 0 40px;padding-left:3px;border-radius:3px;display:flex;align-items:center;white-space:pre;word-spacing:2px;font-size:12px}
.tree-node.on{background:#bcd6f0}
.tree-node+.tree-node{margin-top:3px}

.pt-wrap{height:289px;flex:none;background:linear-gradient(#f0f0f0,#f0f0f0) 0 0/22px 100% no-repeat;border-bottom:1px solid #ccc;border-left:0}
.pt{border-collapse:collapse;table-layout:fixed;width:277px;font-size:12px}
.c1{width:22px}.c2{width:100px}.c3{width:114px}.c4{width:41px}
.pt th,.pt td{height:21px;padding:0 0 0 3px;border:1px solid #ddd;border-top:0;text-align:left;font-weight:400;white-space:nowrap;overflow:hidden;background-clip:padding-box}
.pt th.ctr,.pt td.ctr{text-align:center;padding:0}
.pt th{height:20px}
.pt .hv{background:#6ab0f5;color:#fff;border-color:#5a9fe4}
.pt .n{text-align:center;padding:0;background:#f0f0f0;font-size:13px}
.pt .cur{background:#6ab0f5;color:#fff;font-weight:700}
.pt .lnk{color:#2a5fc8}
.pt .edit{outline:2px solid #666;outline-offset:-2px}
.pm{display:inline-flex;width:13px;height:13px;border:1px solid #999;border-radius:2px;align-items:center;justify-content:center;font-size:11px;color:#555;flex:none}
.pt .pm{margin-right:5px;vertical-align:-1px}
.cb{display:inline-flex;width:14px;height:14px;border:1px solid #888;border-radius:2px;background:#fff;align-items:center;justify-content:center;vertical-align:middle}
.cb.on{background:#2f7fe0;border-color:#2f7fe0}
.cb.on::after{content:"";width:7px;height:3.500px;border-left:2px solid #fff;border-bottom:2px solid #fff;transform:rotate(-45deg) translate(0,-1px)}
.cb.off{background:#f0f0f0;border-color:#ccc}
.cb.part{box-shadow:inset 0 0 0 1px #fff;background:#8fc0f5;border-color:#777}
.pfoot{flex:1;padding:4px 0 0 5px}
.btn{display:flex;align-items:center;justify-content:center;height:23px;border:1px solid #ccc;border-radius:3px;background:#fff;font-size:12px}
.param{width:80px}

.split{width:4px;flex:none;background:#fff;padding-top:372px}
.handle{display:block;height:100px;background:#5c5c5c}

.canvas{width:1207px;flex:none;background:#000;position:relative;overflow:hidden}
.cad-svg{position:absolute;left:0;top:0}
.dim text{font-family:"Roboto","Liberation Sans",sans-serif;font-weight:100;font-size:42px;fill:#35d035}
.dim text.dark{fill:#1a8a1a}
.teal text{font-family:"Roboto","Liberation Sans",sans-serif;font-weight:100;font-size:38px;fill:#146c7c}
.axl text{font-family:"Liberation Sans",sans-serif;font-size:16px;fill:#fff;text-anchor:middle}
.axl text.wide{font-size:17.500px}
.ucs-y{font:700 14px "Liberation Sans",sans-serif;fill:#00e000}
.ucs-x{font:700 14px "Liberation Sans",sans-serif;fill:#f00000}
.hint{position:absolute;left:0;right:0;bottom:0;height:27px;background:rgba(48,48,48,.88);color:#fff;font-weight:700;display:flex;align-items:center;padding-left:399px;white-space:pre;font-size:12px}
.hint-ic{width:16px;height:14px;margin-left:0;margin-right:4px;fill:none;stroke:#fff;stroke-width:1}
.tip{position:absolute;left:387px;top:782px;width:278px;height:29px;background:#0a8dff;border-radius:3px;color:#fff;display:flex;align-items:center;padding-left:7px}
.tip::after{content:"";position:absolute;left:15px;bottom:-6px;border-top:6px solid #0a8dff;border-left:6px solid transparent;border-right:6px solid transparent}
.tip-no{margin-left:39px;color:#b6dcff}
.vbar{position:absolute;right:0;top:0;width:32px;height:246px;background:#fff;border-radius:0 0 0 3px;display:flex;flex-direction:column;align-items:center;padding-top:13px}
.vi{width:20px;height:20px;fill:none;stroke:#444;stroke-width:1;margin-bottom:8.500px}
.vi-t{font:700 7px "Liberation Sans",sans-serif;fill:#2a78d0;stroke:none}
.vdd{width:0;height:0;border-top:4px solid #444;border-left:4px solid transparent;border-right:4px solid transparent;margin:1px 0 6px;flex:none}
.vsep{width:24px;height:1px;background:#999;margin:-1px 0 6px;flex:none}
.dlg{position:absolute;left:533px;top:212px;width:402px;height:329px;background:#e3e3e3;display:flex;flex-direction:column;padding:0 12px;box-shadow:0 0 0 1px #c8c8c8 inset}
.dlg-head{height:40px;flex:none;display:flex;align-items:center;justify-content:space-between;font-size:14px;color:#444;padding-right:1px}
.dlg-x{width:12px;height:12px;fill:none;stroke:#777;stroke-width:1}
.dlg-body{height:249px;flex:none;background:#fff;border:1px solid #c6c6c6;padding:7px 4px;color:#333;font-size:12px}
.dlg-foot{flex:1;display:flex;justify-content:flex-end;padding-top:6px}
.dlg-btn{width:75px;height:23px;background:#2f80e4;border-radius:3px;color:#fff;display:flex;align-items:center;justify-content:center}

.disp{flex:1;min-width:0;border-left:1px solid #ccc;border-bottom:1px solid #ccc;background:#fff;display:flex;flex-direction:column}
.dtabs{height:27px;flex:none;display:flex;align-items:flex-end;padding-left:3px;gap:3px}
.dtab{width:61px;height:22px;display:flex;align-items:center;justify-content:center;background:#ddd;color:#666;border-radius:3px 3px 0 0;font-size:12px}
.dtab.on{height:25px;background:#fff;color:#2a78d0;border:1px solid #ccc;border-bottom:0}
.dtable{height:742px;flex:none;margin:0 2px 0 2px;border:1px solid #ddd;position:relative;overflow:hidden}
.dhead,.dr{display:grid;grid-template-columns:134px 63px 63px;width:260px;border-bottom:1px solid #ddd}
.dhead{height:23px;align-items:center}
.dhead>*,.dr>*{display:flex;align-items:center;height:100%;border-right:1px solid #ddd}
.dh1{justify-content:center;padding-right:0}
.dc{justify-content:center}
.dr{height:21px}
.dt{white-space:nowrap;padding-left:41px;background:linear-gradient(#ddd,#ddd) 8px 0/1px 100% no-repeat}
.dt.sub{background:linear-gradient(#ddd,#ddd) 8px 0/1px 100% no-repeat,linear-gradient(#ddd,#ddd) 18px 0/1px 100% no-repeat,linear-gradient(#ddd,#ddd) 18px 50%/17px 1px no-repeat}
.dt.sub.last{background:linear-gradient(#ddd,#ddd) 8px 0/1px 100% no-repeat,linear-gradient(#ddd,#ddd) 18px 0/1px 50% no-repeat,linear-gradient(#ddd,#ddd) 18px 50%/17px 1px no-repeat}
.dt.gp{padding-left:12px}
.dt.gp .pm{margin-right:6px}
.drows{height:718px;overflow:hidden}
.scroll{position:absolute;left:263px;top:33px;width:8px;height:198px;background:#ccc;border-radius:4px}
.dfoot{flex:1;display:flex;justify-content:flex-end;padding:8px 10px 0 0}
.reset{width:89px;height:25px}

/* status */
.status{height:31px;flex:none;background:#fafafa;display:flex;align-items:center;position:relative;white-space:nowrap}
.st{color:#444}
.s1{margin-left:2px}.s2{margin-left:4px}.s3{margin-left:43px}.s4{margin-left:5px;font-size:12.500px}.s5{margin-left:53px}.s6{margin-left:1px}.s7{margin-left:43px}.s8{margin-left:0}
.sbtns{display:flex;align-items:center;margin-left:43px}
.sb{height:25px;border:1px solid #aaa;border-radius:3px;background:#fff;display:flex;align-items:center;justify-content:center;gap:3px}
.sb .ar{margin:0}
.sb.on{background:#d5e6fa;border-color:#3a86dc}
.sb-ic{width:16px;height:16px;fill:none;stroke:#555;stroke-width:1}
.w24{width:24px}.w25{width:25px}.w34{width:34px}.w36{width:36px}
.m3{margin-left:3px}.m4{margin-left:4px}.m6{margin-left:6px}.m7{margin-left:7px}
.taskbar{height:8px;flex:none;background:#23272b;display:flex;overflow:hidden}
.tk-light{width:287px;margin-left:48px;background:#e8e8e8;position:relative;display:block}
.tk-a{position:absolute;left:235px;top:2px;width:3px;height:6px;background:#d0304a}
.tk-b{position:absolute;left:260px;top:2px;width:4px;height:6px;background:#6a7a8a}
.tk-gray{width:48px;margin-left:297px;background:#555}
.tk-time{margin-left:1137px;color:#fff;font-size:12px;line-height:12px;margin-top:4px}
.tk-line{width:1px;margin-left:70px;background:#888}
```
